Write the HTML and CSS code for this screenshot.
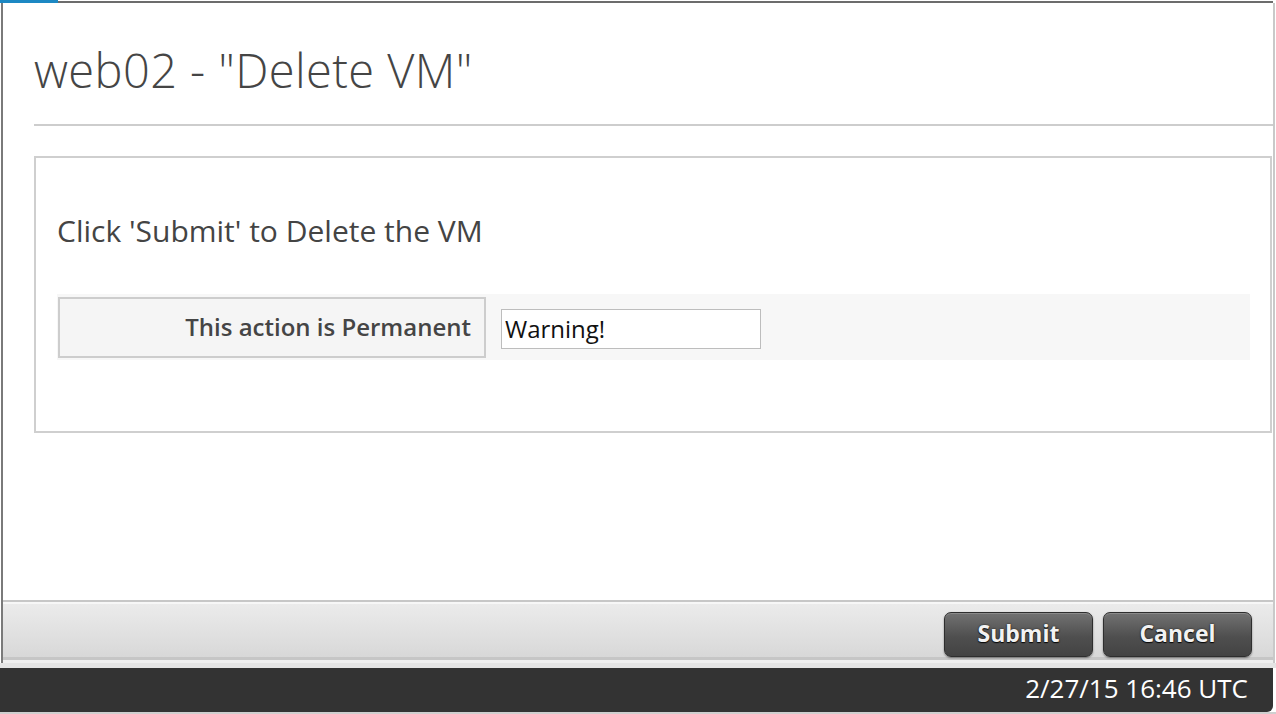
FILE: index.html
```html
<!DOCTYPE html>
<html lang="en">
<head>
<meta charset="utf-8">
<title>web02 - Delete VM</title>
<link rel="stylesheet" href="styles.css">
</head>
<body>
<div class="topbar"><span class="topbar-tab"></span><span class="topbar-line"></span></div>
<div class="frame">
  <header class="dlg-header"><h1 class="dlg-title">web02 - "Delete VM"</h1></header>
  <main class="dlg-main">
    <section class="panel">
      <h2 class="panel-heading">Click 'Submit' to Delete the VM</h2>
      <div class="form-row">
        <div class="form-label">This action is Permanent</div>
        <div class="form-field"><input class="text-input" type="text" value="Warning!"></div>
      </div>
    </section>
  </main>
  <footer class="dlg-footer">
    <button class="btn" type="button">Submit</button>
    <button class="btn" type="button">Cancel</button>
  </footer>
</div>
<div class="sep"></div>
<div class="statusbar"><span class="clock">2/27/15 16:46 UTC</span></div>
</body>
</html>
```

FILE: styles.css
```css
* { box-sizing: border-box; }
html, body { margin: 0; padding: 0; background: #fff; }
body {
  width: 1276px;
  height: 714px;
  overflow: hidden;
  font-family: "Open Sans", "Liberation Sans", sans-serif;
  color: #444;
  display: flex;
  flex-direction: column;
}
.topbar {
  height: 3px;
  display: flex;
  align-items: flex-end;
}
.topbar-tab { width: 58px; height: 3px; background: #1c88c3; }
.topbar-line { width: 1215px; height: 2px; background: #6c6c6c; }

.frame {
  height: 660px;
  margin: 0 1px;
  border-left: 2px solid #7a7a7a;
  border-right: 2px solid #c9c9c9;
  display: flex;
  flex-direction: column;
}
.dlg-header {
  margin-left: 31px;
  height: 123px;
  padding-top: 37px;
  border-bottom: 2px solid #cdcdcd;
}
.dlg-title {
  margin: 0;
  font-size: 47px;
  line-height: 60px;
  letter-spacing: 0.4px;
  font-weight: 300;
  color: #454545;
}
.dlg-main {
  flex: 1;
  padding: 30px 1px 0 31px;
}
.panel {
  height: 277px;
  border: 2px solid #cfcfcf;
  padding: 0 20px 0 21px;
}
.panel-heading {
  margin: 53px 0 0;
  font-size: 30px;
  line-height: 40px;
  font-weight: 400;
  color: #444;
}
.form-row {
  margin-top: 43px;
  height: 66px;
  background: #f7f7f7;
  display: flex;
  align-items: center;
  padding-left: 1px;
}
.form-label {
  width: 428px;
  height: 61px;
  margin-top: 1px;
  border: 2px solid #cdcdcd;
  background: #f5f5f5;
  display: flex;
  align-items: center;
  justify-content: flex-end;
  padding-right: 13px;
  padding-bottom: 2px;
  font-size: 24px;
  font-weight: 600;
  color: #454545;
}
.form-field {
  margin-left: 15px;
  margin-top: 3px;
}
.text-input {
  width: 260px;
  height: 40px;
  border: 1px solid #bdbdbd;
  background: #fff;
  padding: 0 3px;
  font-family: "Open Sans", "Liberation Sans", sans-serif;
  font-size: 24px;
  color: #111;
  outline: none;
}
.dlg-footer {
  height: 63px;
  border-top: 2px solid #c7c7c7;
  background: linear-gradient(#f7f7f7 0, #f7f7f7 2px, #ebebeb 2px, #d8d8d8 calc(100% - 6px), #c6c6c6 calc(100% - 6px), #c6c6c6 calc(100% - 3px), #efefef calc(100% - 3px));
  display: flex;
  justify-content: flex-end;
  align-items: flex-start;
  gap: 10px;
  padding: 10px 21px 0 0;
}
.btn {
  width: 149px;
  height: 45px;
  border: 1px solid #2e2e2e;
  border-radius: 7px;
  background: linear-gradient(#727272, #4f4f4f 55%, #434343);
  box-shadow: 0 1px 2px rgba(0,0,0,0.45), inset 0 1px 0 rgba(255,255,255,0.18);
  color: #f2f2f2;
  font-family: "Open Sans", "Liberation Sans", sans-serif;
  font-size: 23px;
  font-weight: 700;
  text-shadow: 0 0 2px #1a1a1a, 0 1px 1px #000;
  padding: 0 0 4px;
  cursor: pointer;
}
.sep {
  height: 5px;
  background: #e4e4e4;
}
.statusbar {
  height: 44px;
  width: 1273px;
  background: #333;
  border-bottom-right-radius: 6px;
  display: flex;
  justify-content: flex-end;
  align-items: center;
  padding: 0 25px 4px 0;
}
.clock {
  color: #fff;
  font-size: 26px;
  line-height: 30px;
}
body::after {
  content: "";
  height: 2px;
  background: #cfcfcf;
}
```
